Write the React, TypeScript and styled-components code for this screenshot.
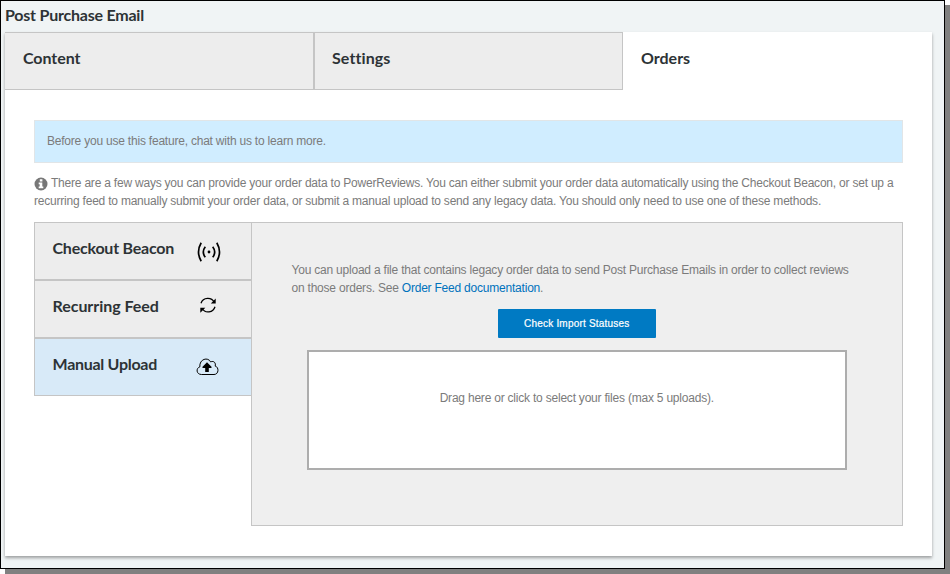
import React from "react";
import styled, { createGlobalStyle } from "styled-components";

const GlobalStyle = createGlobalStyle`
  *, *::before, *::after { box-sizing: border-box; }
  html, body { margin: 0; padding: 0; background: #fff; }
  body { font-family: "Liberation Sans", Arial, sans-serif; font-size: 12px; color: #7b7b7b; }
  h1, p { margin: 0; }
`;

const Page = styled.div`
  width: 950px;
  height: 574px;
  overflow: hidden;
`;

const Frame = styled.main`
  width: 945px;
  height: 569px;
  border: 1px solid #000;
  background: #f0f4f5;
  box-shadow: 5px 5px 0 #808080;
  padding: 0 12px 12px 4px;
`;

const headingFont = `
  font-family: Lato, "Open Sans", sans-serif;
  font-weight: 700;
  font-size: 16px;
  line-height: 20px;
  color: #2d3336;
  white-space: nowrap;
`;

const Title = styled.h1`
  ${headingFont}
  height: 31px;
  padding-top: 4px;
  letter-spacing: -0.22px;
`;

const Card = styled.section`
  width: 927px;
  height: 524px;
  background: #fff;
  box-shadow: 0 2px 3px rgba(0, 0, 0, 0.35);
`;

const TabBar = styled.nav`
  display: grid;
  grid-template-columns: repeat(3, 309px);
  height: 58px;
`;

const Tab = styled.div<{ $active?: boolean; $spacing: number }>`
  ${headingFont}
  padding: 15px 17px;
  letter-spacing: ${(p) => p.$spacing}px;
  border: 1px solid ${(p) => (p.$active ? "transparent" : "#c5c5c5")};
  background: ${(p) => (p.$active ? "#fff" : "#ededed")};
  &:first-child { border-left: 0; padding-left: 18px; }
`;

const Body = styled.div`
  padding: 30px 29px 0;
`;

const Notice = styled.div`
  height: 43px;
  padding: 12px;
  border: 1px solid #e1e5e7;
  background: #d0edff;
  line-height: 16px;
`;

const Line = styled.span`
  display: block;
  white-space: nowrap;
  letter-spacing: -0.213px;
`;

const Intro = styled.p`
  height: 59px;
  padding-top: 11px;
  line-height: 18px;
`;

const InfoIcon = styled.svg`
  width: 14px;
  height: 14px;
  margin-right: 3px;
  vertical-align: -4px;
`;

const Methods = styled.div`
  display: flex;
  align-items: flex-start;
`;

const MethodList = styled.nav`
  width: 217px;
`;

const Method = styled.div<{ $active?: boolean; $spacing: number }>`
  ${headingFont}
  display: flex;
  height: 58px;
  border: 1px solid #c5c5c5;
  border-right: 0;
  padding: 15px 0 0 17.5px;
  letter-spacing: ${(p) => p.$spacing}px;
  background: ${(p) => (p.$active ? "#d8eaf8" : "#ededed")};
`;

const MethodLabel = styled.span`
  width: 143px;
`;

const MethodIcon = styled.svg<{ $top?: number }>`
  width: 26px;
  height: 26px;
  margin-top: ${(p) => p.$top ?? 1}px;
  fill: none;
  stroke: #000;
`;

const UploadPanel = styled.div`
  width: 652px;
  height: 304px;
  border: 1px solid #c5c5c5;
  background: #efefef;
  padding: 38px 40px 0 39.5px;
  display: flex;
  flex-direction: column;
  line-height: 18px;
`;

const DocLink = styled.a`
  color: #0072bc;
`;

const StatusButton = styled.button`
  align-self: center;
  width: 158px;
  height: 29px;
  margin: 12px 0;
  padding: 0;
  border: 0;
  border-radius: 1px;
  background: #007ac3;
  color: #fff;
  font: 10px "Liberation Sans", Arial, sans-serif;
  letter-spacing: 0.2px;
  -webkit-text-stroke: 0.2px #fff;
`;

const DropZone = styled.div`
  align-self: center;
  width: 540px;
  height: 120px;
  border: 2px solid #adadad;
  background: #fff;
  padding-top: 37px;
  text-align: center;
`;

export default function App() {
  return (
    <Page>
      <GlobalStyle />
      <Frame>
        <Title>Post Purchase Email</Title>
        <Card>
          <TabBar>
            <Tab $spacing={-0.05}>Content</Tab>
            <Tab $spacing={0.1}>Settings</Tab>
            <Tab $active $spacing={0}>Orders</Tab>
          </TabBar>
          <Body>
            <Notice>
              <Line>Before you use this feature, chat with us to learn more.</Line>
            </Notice>
            <Intro>
              <Line>
                <InfoIcon viewBox="0 0 14 14">
                  <circle cx="7" cy="7" r="6.5" fill="#777" />
                  <path d="M5.8 2.3h2.6v2.2H5.8zM4.7 5.6h3.6v4h1v1.7H4.7V9.6h1V7.3h-1z" fill="#fff" />
                </InfoIcon>
                There are a few ways you can provide your order data to PowerReviews. You can either submit your order data automatically using the Checkout Beacon, or set up a
              </Line>
              <Line>
                recurring feed to manually submit your order data, or submit a manual upload to send any legacy data. You should only need to use one of these methods.
              </Line>
            </Intro>
            <Methods>
              <MethodList>
                <Method $spacing={-0.22}>
                  <MethodLabel>Checkout Beacon</MethodLabel>
                  <MethodIcon viewBox="0 0 26 26" strokeWidth="1.7">
                    <path d="M5.2 3.8Q-.2 13 5.2 22.2M20.8 3.8Q26.2 13 20.8 22.2" />
                    <path d="M9.3 7.7Q5.3 13 9.3 18.3M16.7 7.7Q20.7 13 16.7 18.3" />
                    <circle cx="13" cy="13" r="1.4" fill="#000" stroke="none" />
                  </MethodIcon>
                </Method>
                <Method $spacing={-0.04}>
                  <MethodLabel>Recurring Feed</MethodLabel>
                  <MethodIcon $top={0} viewBox="0 0 26 26" strokeWidth="1.3">
                    <path d="M5 7.5A7.2 7.2 0 0 1 18.3 6.8M19 11A7.2 7.2 0 0 1 6 12.8" transform="translate(0 -.3)" />
                    <path d="M19.7 2.4V7.6H14.8zM4.3 16.8V11.8H9.3z" fill="#000" stroke="none" />
                  </MethodIcon>
                </Method>
                <Method $active $spacing={-0.28}>
                  <MethodLabel>Manual Upload</MethodLabel>
                  <MethodIcon viewBox="0 0 26 26" strokeWidth="1">
                    <path d="M5.5 19.5C.1 19.5-.2 13 3.8 11.9C3.2 3.8 12.1 1.7 14.6 6.9C18 5.4 20 8 19.2 11.1C23.1 12 23 19.5 18 19.5Z" />
                    <path d="M11 7.3L15.5 11.7V13H12.8V17H9.2V13H6.5V11.7z" fill="#000" stroke="none" />
                  </MethodIcon>
                </Method>
              </MethodList>
              <UploadPanel>
                <Line>You can upload a file that contains legacy order data to send Post Purchase Emails in order to collect reviews</Line>
                <Line>on those orders. See <DocLink>Order Feed documentation</DocLink>.</Line>
                <StatusButton type="button">Check Import Statuses</StatusButton>
                <DropZone>
                  <Line>Drag here or click to select your files (max 5 uploads).</Line>
                </DropZone>
              </UploadPanel>
            </Methods>
          </Body>
        </Card>
      </Frame>
    </Page>
  );
}
